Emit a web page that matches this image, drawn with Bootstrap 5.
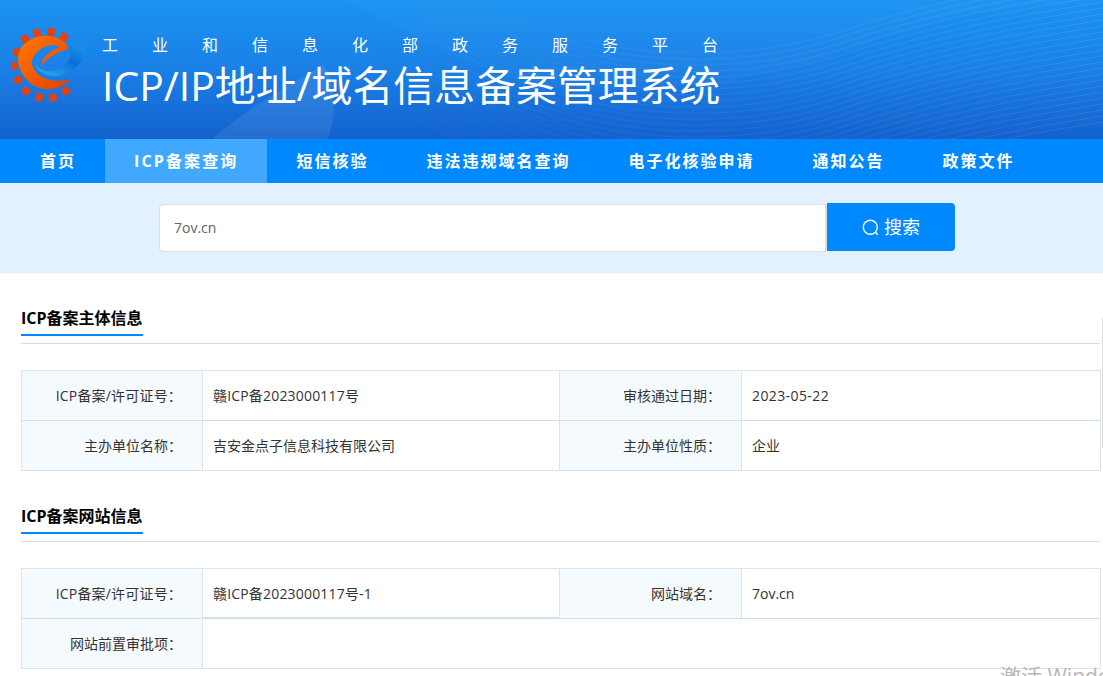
<!DOCTYPE html>
<html lang="zh-CN">
<head>
<meta charset="utf-8">
<title>ICP/IP地址/域名信息备案管理系统</title>
<link href="https://cdn.jsdelivr.net/npm/bootstrap@5.3.0/dist/css/bootstrap.min.css" rel="stylesheet">
<style>
html,body{overflow:hidden;height:100%}
body{font-family:"Open Sans","Noto Sans CJK SC",sans-serif;font-size:14px;color:#333;background:#fff;position:relative}
.hero{height:139px;background:linear-gradient(180deg,#1a93f2 0%,#1a80e6 50%,#1461cd 100%);position:relative;overflow:hidden;padding:27px 0 0 11px}
.hero-waves{position:absolute;inset:0;width:100%;height:100%}
.hero-logo{width:75px;height:75px;flex:none;position:relative}
.hero-text{position:relative;padding:0 0 0 16px;color:#fff}
.hero-sub{font-size:16px;line-height:22px;margin-top:7px;letter-spacing:34px;white-space:nowrap}
.hero-title{font-size:40.900px;line-height:50px;margin:4px 0 0;font-weight:400;white-space:nowrap}
.mainnav{height:44px;background:#0089ff;padding-left:11px}
.mainnav a{display:block;padding:0 29px;line-height:44px;font-size:16px;font-weight:700;letter-spacing:2px;color:#fff;text-decoration:none;white-space:nowrap}
.mainnav a.is-on{background:#40a9ff;letter-spacing:2.130px}
.searchband{height:90px;background:#e3f1ff;padding:20px 148px 0 159px}
.searchbox{height:48px;margin-top:1px;width:668px;border:1px solid #dcdfe6;border-right-width:2px;border-radius:4px 0 0 4px;padding:0 14px;font-size:14px;color:#606266;background:#fff;line-height:46px}
.searchbtn{width:128px;height:48px;border:0;background:#0089ff;color:#fff;font-size:18px;border-radius:0 4px 4px 0;gap:5px;padding:0}
.sec-head{border-bottom:1px solid #d5dde5;height:38px;margin:33px 3px 0 21px;box-sizing:border-box}
.sec-title{display:inline-block;font-size:16px;font-weight:700;color:#000;line-height:24px;padding-bottom:4px;border-bottom:2px solid #0089ff;margin:0}
.infotable-wrap{margin:26px 2px 0 21px}
table.infotable{table-layout:fixed;width:1079px;margin:0;border:1px solid #dfe2e6;border-collapse:collapse}
.infotable td,.infotable th{height:50px;padding:0 10px;vertical-align:middle;font-size:14px;font-weight:400;color:#333;border:0;border-bottom:1px solid #cfe1f1;box-shadow:none;background:#fff}
.infotable tr:last-child td,.infotable tr:last-child th{border-bottom:1px solid #dfe2e6}
.infotable th{background:#f5fafe;text-align:right;padding-right:20px;border-left:1px solid #dde4ea;border-right:1px solid #dde4ea}
.infotable td.deepline{box-shadow:inset 0 -1px 0 #cfe1f1}
.infotable td.wide-digits{letter-spacing:.4px}
.infotable .code-text{letter-spacing:.18px}
.cw-a{width:181px}.cw-b{width:357px}.cw-c{width:182px}.cw-d{width:359px}
.winmark{position:absolute;left:1000px;top:663px;font-size:21px;color:#b8b8b8;white-space:nowrap;line-height:26px}
.edgeline{position:absolute;left:1102px;top:318px;width:1px;height:130px;background:#dcdfe3}
</style>
</head>
<body>
<header class="hero d-flex">
  <svg class="hero-waves" viewBox="0 0 1103 139" preserveAspectRatio="none" aria-hidden="true">
    <defs>
      <linearGradient id="wv" x1="0" y1="0" x2="1" y2="0"><stop offset="0" stop-color="#fff" stop-opacity=".02"/><stop offset="1" stop-color="#fff" stop-opacity=".09"/></linearGradient>
    </defs>
    <path d="M212 139C250 105 300 80 322 65C335 75 338 110 328 139Z" fill="#fff" opacity=".08"/>
    <path d="M340 0C400 25 450 60 520 80C620 105 760 85 880 40C930 20 980 8 1103 0V0Z" fill="#fff" opacity=".02"/>
    <g id="wvlines" fill="none" stroke="url(#wv)" stroke-width="1"></g>
  </svg>
  <svg class="hero-logo" viewBox="11 26 75 75" aria-hidden="true">
    <defs>
      <linearGradient id="lgO" x1="0" y1="0" x2="1" y2="1"><stop offset="0" stop-color="#ff7a00"/><stop offset="1" stop-color="#e83c00"/></linearGradient>
      <linearGradient id="lgB" x1="0" y1="1" x2="1" y2="0"><stop offset="0" stop-color="#31b4f0"/><stop offset=".6" stop-color="#0a6fd8"/><stop offset="1" stop-color="#1c9aea"/></linearGradient>
    </defs>
    <g fill="#e8400c" stroke="#e8400c" stroke-width=".5">
      <rect x="33.500" y="28.500" width="7" height="7" transform="rotate(-15 37 32)"/>
      <rect x="47.500" y="27.500" width="7" height="7" transform="rotate(8 51 31)"/>
      <rect x="60.500" y="32.500" width="7" height="7" transform="rotate(30 64 36)"/>
      <rect x="21.500" y="34.500" width="7" height="7" transform="rotate(-40 25 38)"/>
      <rect x="13.500" y="47.500" width="7" height="7" transform="rotate(-20 17 51)"/>
      <rect x="11" y="61.500" width="6" height="7" transform="rotate(-5 14 65)"/>
      <rect x="14.500" y="75.500" width="7" height="7" transform="rotate(20 18 79)"/>
      <rect x="22.500" y="86.500" width="7" height="7" transform="rotate(35 26 90)"/>
      <rect x="35.500" y="93" width="7" height="7" transform="rotate(10 39 97)"/>
      <rect x="49.500" y="93" width="7" height="7" transform="rotate(-10 53 97)"/>
      <rect x="62.500" y="86.500" width="7" height="7" transform="rotate(-30 66 90)"/>
    </g>
    <path d="M35 62C38 70 52 74 62 66C72 60 73 50 67 44C77 42 86 45 85 52C84 62 68 76 54 75C44 74 36 70 35 62Z" fill="url(#lgB)"/>
    <path d="M71 78C62 88 45 92 33 84C20 75 15 60 20 49C27 35 47 31 60 38C65 41 68 44 68 48C58 51 47 56 41 66C41 57 49 50 60 46C50 41 36 47 32 60C31 72 48 85 71 78Z" fill="url(#lgO)"/>
  </svg>
  <div class="hero-text">
    <div class="hero-sub">工业和信息化部政务服务平台</div>
    <h1 class="hero-title">ICP/IP地址/域名信息备案管理系统</h1>
  </div>
</header>
<nav class="mainnav d-flex">
  <a href="#">首页</a>
  <a href="#" class="is-on">ICP备案查询</a>
  <a href="#">短信核验</a>
  <a href="#">违法违规域名查询</a>
  <a href="#">电子化核验申请</a>
  <a href="#">通知公告</a>
  <a href="#">政策文件</a>
</nav>
<section class="searchband d-flex align-items-start">
  <div class="searchbox">7ov.cn</div>
  <button type="button" class="searchbtn btn d-flex align-items-center justify-content-center">
    <svg width="17" height="17" viewBox="0 0 17 17" fill="none" stroke="#fff" stroke-width="1.400" aria-hidden="true"><circle cx="8.300" cy="8.300" r="7"/><path d="M13.300 13.300l2.500 2.500"/></svg>
    <span>搜索</span>
  </button>
</section>
<main>
  <div class="sec-head"><h2 class="sec-title">ICP备案主体信息</h2></div>
  <div class="infotable-wrap">
    <table class="infotable table">
      <colgroup><col class="cw-a"><col class="cw-b"><col class="cw-c"><col class="cw-d"></colgroup>
      <tr><th class="code-text">ICP备案/许可证号：</th><td class="code-text">赣ICP备2023000117号</td><th>审核通过日期：</th><td class="wide-digits">2023-05-22</td></tr>
      <tr><th>主办单位名称：</th><td>吉安金点子信息科技有限公司</td><th>主办单位性质：</th><td>企业</td></tr>
    </table>
  </div>
  <div class="sec-head"><h2 class="sec-title">ICP备案网站信息</h2></div>
  <div class="infotable-wrap">
    <table class="infotable table">
      <colgroup><col class="cw-a"><col class="cw-b"><col class="cw-c"><col class="cw-d"></colgroup>
      <tr><th class="code-text">ICP备案/许可证号：</th><td class="deepline code-text">赣ICP备2023000117号-1</td><th>网站域名：</th><td>7ov.cn</td></tr>
      <tr><th>网站前置审批项：</th><td colspan="3"></td></tr>
    </table>
  </div>
</main>
<div class="edgeline"></div>
<div class="winmark">激活 Windows</div>
<script>
var g=document.getElementById('wvlines'),s='';
for(var i=0;i<26;i++){var y=-10+i*6;s+='<path d="M420 '+(y-20)+'C560 '+(y+70)+' 720 '+(y+85)+' 860 '+(y+35)+'C960 '+(y+5)+' 1040 '+(y-8)+' 1103 '+(y-18)+'"/>';}
g.innerHTML=s;
</script>
<script src="https://cdn.jsdelivr.net/npm/bootstrap@5.3.0/dist/js/bootstrap.bundle.min.js"></script>
</body>
</html>
